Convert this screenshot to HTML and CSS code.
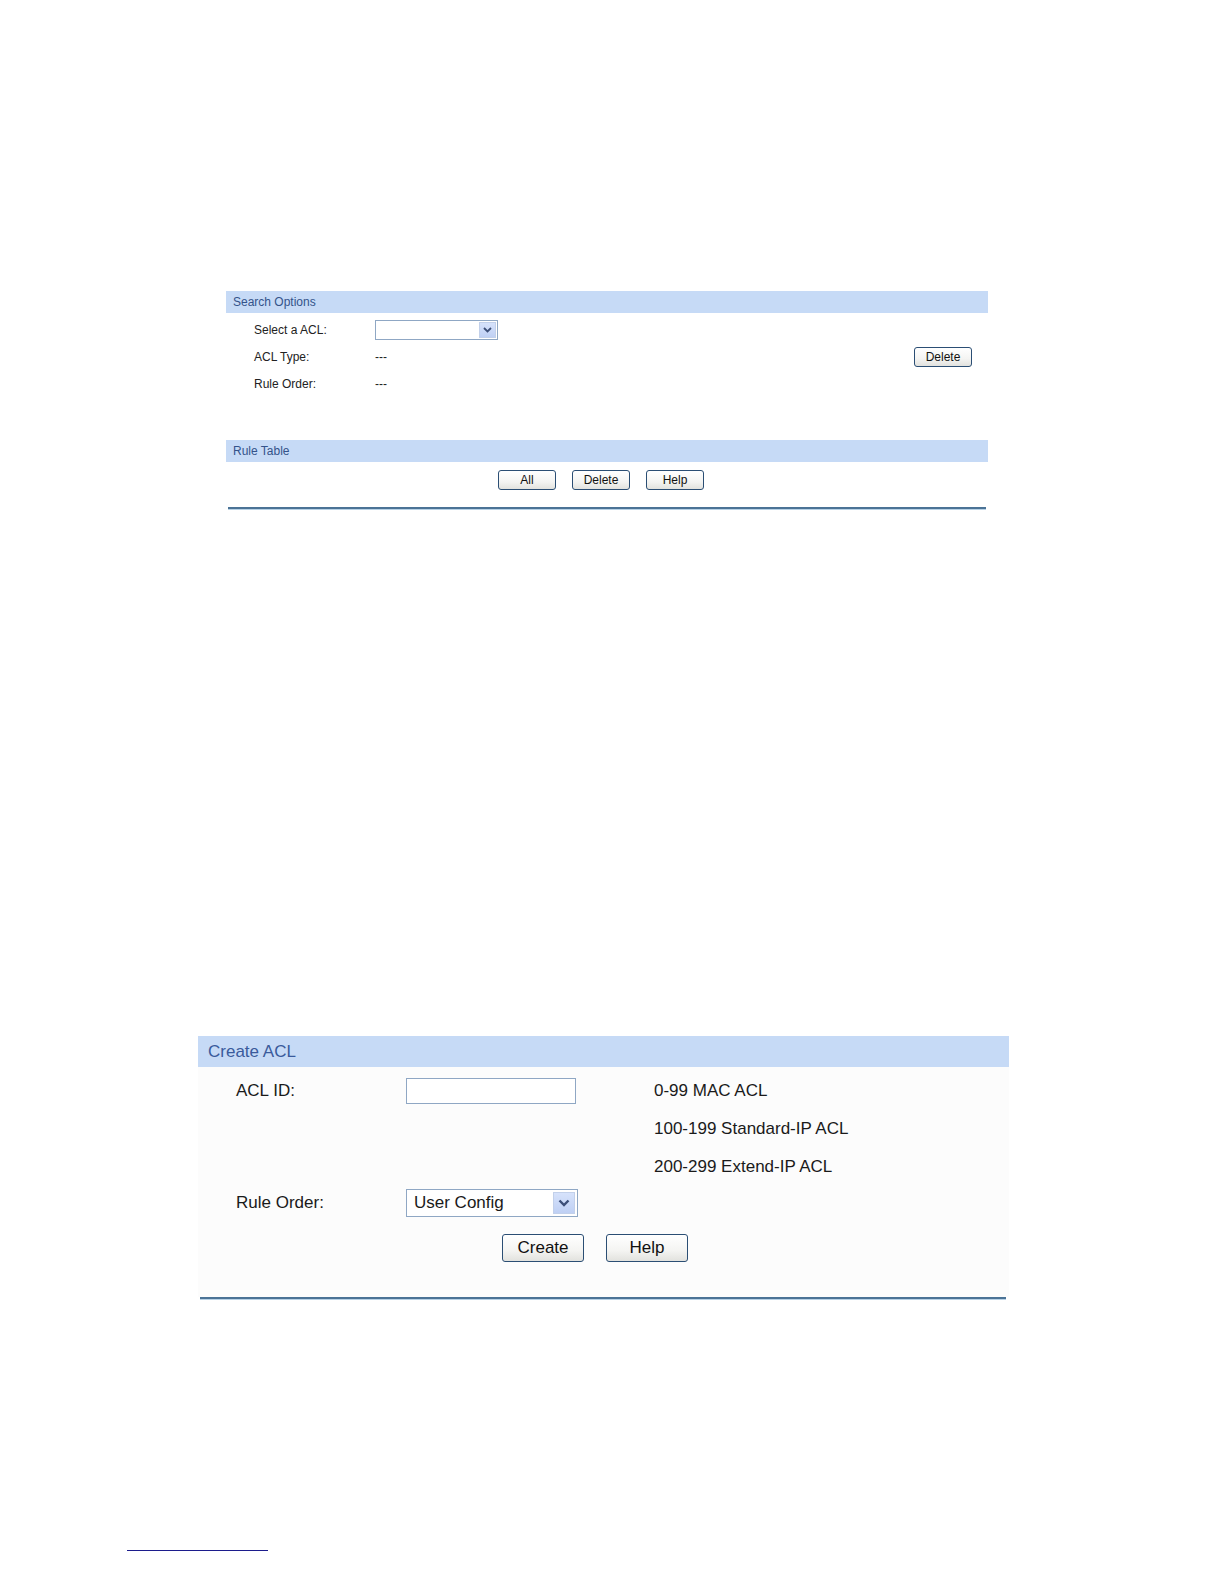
FILE: index.html
```html
<!DOCTYPE html>
<html>
<head>
<meta charset="utf-8">
<title>ACL</title>
<link rel="stylesheet" href="styles.css">
</head>
<body>
<div class="page">
  <section class="panel small">
    <div class="bar">Search Options</div>
    <div class="sbody">
      <div class="srow">
        <span class="slabel">Select a ACL:</span>
        <div class="sel sel-s"><span class="sel-txt"></span><span class="arrow"><svg width="9" height="6" viewBox="0 0 9 6"><path d="M1 1 L4.5 4.5 L8 1" fill="none" stroke="#3d4f78" stroke-width="1.8"/></svg></span></div>
      </div>
      <div class="srow">
        <span class="slabel">ACL Type:</span>
        <span class="sval">---</span>
        <button class="btn btn-s btn-right">Delete</button>
      </div>
      <div class="srow">
        <span class="slabel">Rule Order:</span>
        <span class="sval">---</span>
      </div>
    </div>
    <div class="bar bar-gap">Rule Table</div>
    <div class="sbtns">
      <button class="btn btn-s">All</button>
      <button class="btn btn-s">Delete</button>
      <button class="btn btn-s">Help</button>
    </div>
    <div class="rule rule-s"></div>
  </section>

  <section class="panel large">
    <div class="bar-l">Create ACL</div>
    <div class="lbody">
      <div class="lrow">
        <span class="llabel">ACL ID:</span>
        <span class="lfield"><span class="inp"></span></span>
        <span class="lnote">0-99 MAC ACL</span>
      </div>
      <div class="lrow">
        <span class="llabel"></span>
        <span class="lfield"></span>
        <span class="lnote">100-199 Standard-IP ACL</span>
      </div>
      <div class="lrow">
        <span class="llabel"></span>
        <span class="lfield"></span>
        <span class="lnote">200-299 Extend-IP ACL</span>
      </div>
      <div class="lrow lrow-last">
        <span class="llabel">Rule Order:</span>
        <span class="lfield"><div class="sel sel-l"><span class="sel-txt">User Config</span><span class="arrow"><svg width="12" height="8" viewBox="0 0 12 8"><path d="M1.5 1.5 L6 6 L10.5 1.5" fill="none" stroke="#3d4f78" stroke-width="2.4"/></svg></span></div></span>
      </div>
      <div class="lbtns">
        <button class="btn btn-l">Create</button>
        <button class="btn btn-l">Help</button>
      </div>
    </div>
    <div class="rule rule-l"></div>
  </section>

  <div class="footline"></div>
</div>
</body>
</html>
```

FILE: styles.css
```css
html, body {
  margin: 0;
  padding: 0;
  background: #ffffff;
}
.page {
  width: 1224px;
  height: 1584px;
  font-family: "Liberation Sans", Arial, sans-serif;
  color: #111;
  display: flex;
  flex-direction: column;
  overflow: hidden;
}
.panel.small {
  margin: 291px 0 0 226px;
  width: 762px;
  font-size: 12px;
}
.bar {
  height: 22px;
  line-height: 22px;
  background: #c6daf6;
  color: #34538a;
  padding-left: 7px;
  font-size: 12px;
}
.bar-gap {
  margin-top: 43px;
}
.sbody {
  padding-top: 3px;
}
.srow {
  height: 27px;
  display: flex;
  align-items: center;
  padding-left: 28px;
  color: #222;
}
.slabel {
  width: 121px;
}
.sval {
  flex: 1;
}
.btn-right {
  margin-left: auto;
  margin-right: 16px;
}
.sel {
  display: flex;
  align-items: stretch;
  border: 1px solid #8fa7c4;
  background: #fff;
  box-sizing: border-box;
}
.sel-s {
  width: 123px;
  height: 20px;
  padding: 1px;
}
.sel-txt {
  flex: 1;
  display: flex;
  align-items: center;
  padding-left: 5px;
}
.arrow {
  display: flex;
  align-items: center;
  justify-content: center;
  background: linear-gradient(#d6e2fb, #bfd0f4);
  border: 1px solid #c2d0ea;
}
.sel-s .arrow {
  width: 15px;
}
.btn {
  font-family: "Liberation Sans", Arial, sans-serif;
  color: #111;
  border: 1px solid #2b4e74;
  border-radius: 3px;
  background: linear-gradient(#ffffff, #f4f4f2 60%, #e2e2de);
  padding: 0;
  box-sizing: border-box;
}
.btn-s {
  width: 58px;
  height: 20px;
  font-size: 12px;
}
.sbtns {
  display: flex;
  gap: 16px;
  padding: 8px 0 0 272px;
  height: 45px;
  box-sizing: border-box;
}
.rule {
  height: 2px;
  background: #4b7396;
  border-bottom: 1px solid #b8d2e6;
}
.rule-s {
  margin: 0 2px;
}
.panel.large {
  margin: 526px 0 0 198px;
  width: 811px;
  font-size: 17px;
}
.bar-l {
  height: 31px;
  line-height: 31px;
  background: #c6daf6;
  color: #3a5a9c;
  padding-left: 10px;
  font-size: 17px;
}
.lbody {
  background: #fcfcfc;
  padding-top: 5px;
  height: 230px;
  box-sizing: border-box;
}
.lrow {
  height: 38px;
  display: flex;
  align-items: center;
  padding-left: 38px;
  color: #1a1a1a;
}
.lrow-last {
  height: 34px;
}
.llabel {
  width: 170px;
}
.lfield {
  width: 248px;
}
.inp {
  display: block;
  width: 170px;
  height: 26px;
  border: 1px solid #8fa7c4;
  background: #fff;
  box-sizing: border-box;
}
.sel-l {
  width: 172px;
  height: 28px;
  padding: 2px;
}
.sel-l .sel-txt {
  padding-left: 5px;
}
.sel-l .arrow {
  width: 20px;
}
.lbtns {
  display: flex;
  gap: 22px;
  padding: 14px 0 0 304px;
}
.btn-l {
  width: 82px;
  height: 28px;
  font-size: 17px;
}
.rule-l {
  margin: 0 3px 0 2px;
}
.footline {
  margin: 250px 0 0 127px;
  width: 141px;
  height: 1px;
  background: #1c1c8c;
}
```
